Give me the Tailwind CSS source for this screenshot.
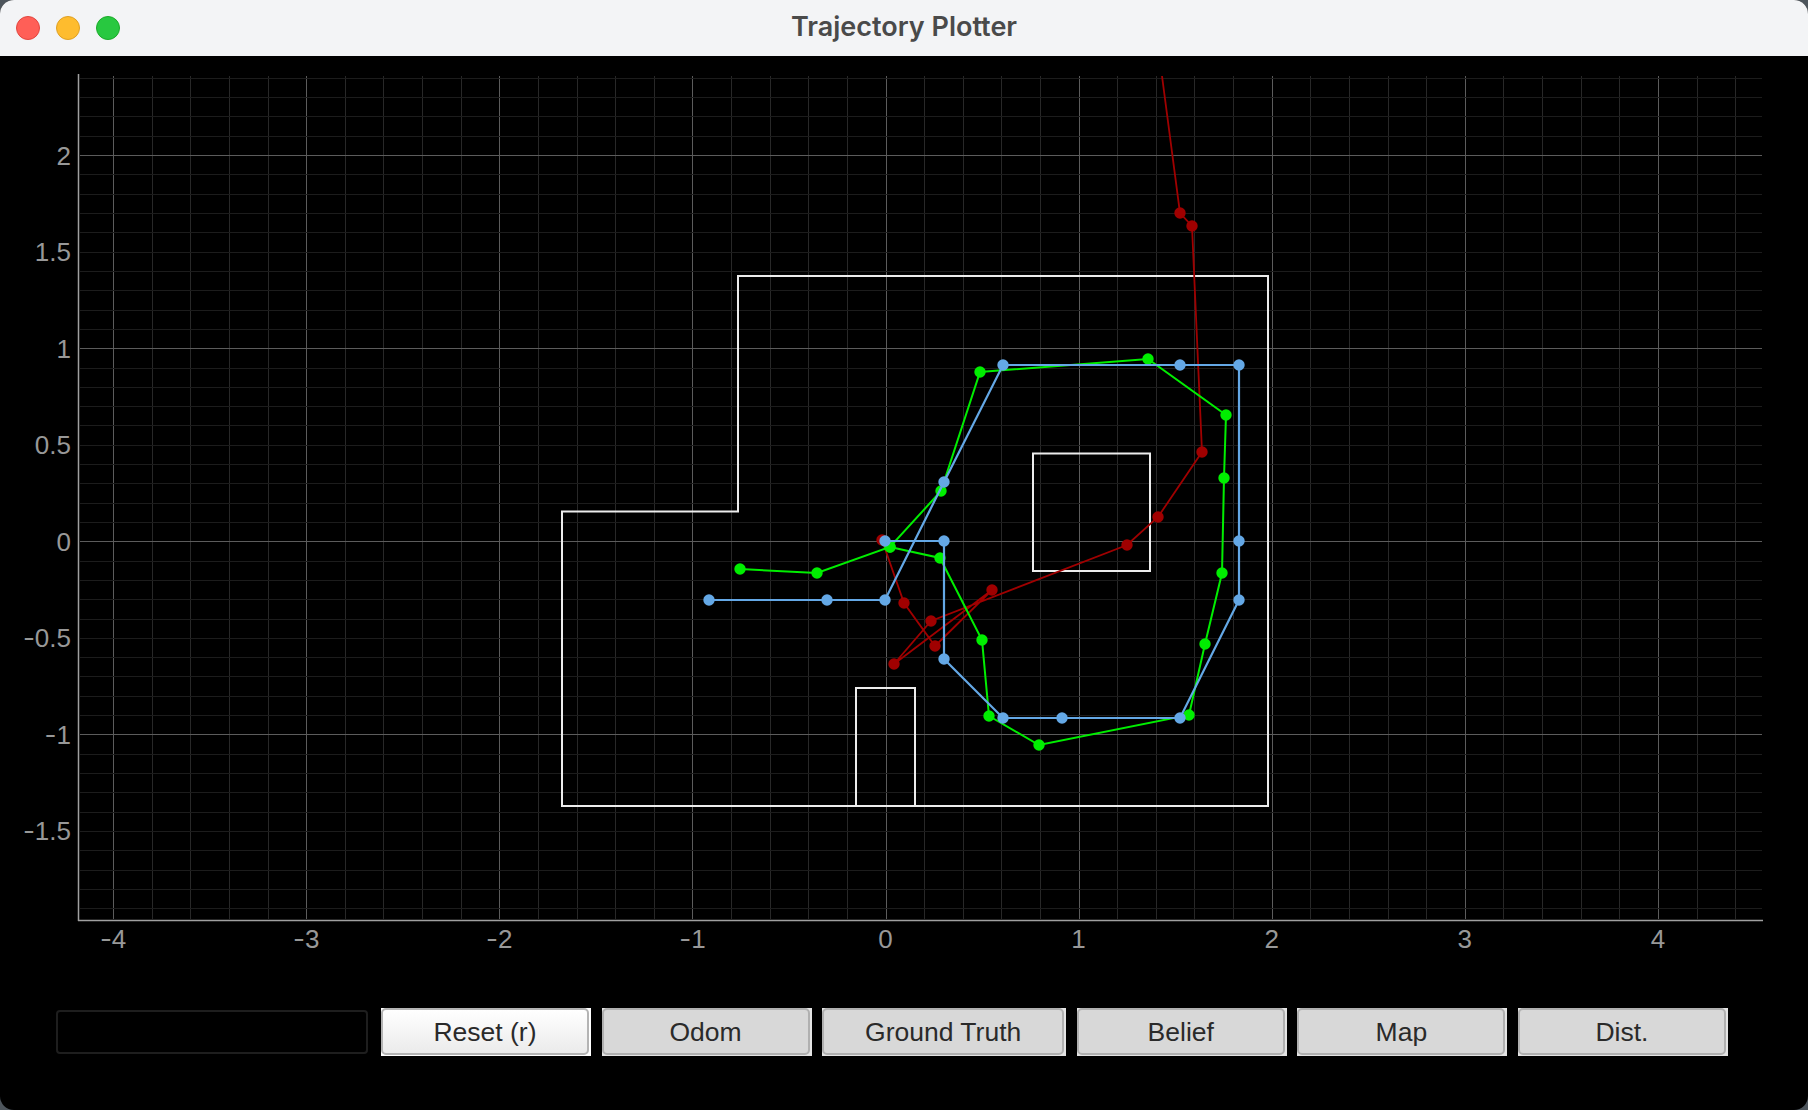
<!DOCTYPE html>
<html lang="en">
  <head>
    <meta charset="UTF-8" />
    <meta name="viewport" content="width=device-width, initial-scale=1.0" />
    <title>Trajectory Plotter</title>
    <script src="https://cdn.jsdelivr.net/npm/@tailwindcss/browser@4"></script>
  </head>
  <body class="bg-[#4d555c] h-[1110px] overflow-hidden font-['Liberation_Sans',sans-serif]">
    <div class="h-full flex flex-col bg-black rounded-[14px] overflow-hidden">
      <!-- Title bar -->
      <div class="h-14 shrink-0 bg-[#f3f4f6] relative flex items-center justify-center">
        <div class="absolute left-4 top-4 flex gap-4">
          <span class="w-6 h-6 rounded-full bg-[#ff5f57] border border-[#e2463f]"></span>
          <span class="w-6 h-6 rounded-full bg-[#febc2e] border border-[#dfa023]"></span>
          <span class="w-6 h-6 rounded-full bg-[#28c840] border border-[#1aab29]"></span>
        </div>
        <span class="text-[27px] font-semibold text-[#4a4a4a] font-['Inter',sans-serif] -mt-[2px]">Trajectory Plotter</span>
      </div>

      <!-- Plot -->
      <svg id="plot" class="block shrink-0" width="1808" height="952" viewBox="0 56 1808 952"></svg>

      <!-- Controls -->
      <div class="flex items-center pl-[56px] gap-[10.6px] h-[48px]">
        <div class="w-[312px] h-[44px] mr-[2.4px] rounded-[4px] border-2 border-[#1e1e1e] bg-black"></div>
        <button class="w-[210px] h-[48px] bg-white pr-[2px] pb-[1px] text-[26.5px] text-[#2a2a2a]">
          <span class="flex items-center justify-center h-full pt-[2px] bg-gradient-to-b from-white to-[#ebebeb] border-2 border-[#b4b4b4] rounded-[5px]">Reset (r)</span>
        </button>
        <button class="w-[210px] h-[48px] bg-[#e4e4e4] pr-[2px] pb-[1px] text-[26.5px] text-[#2a2a2a]">
          <span class="flex items-center justify-center h-full pt-[2px] bg-[#d8d8d8] border-2 border-[#b0b0b0] rounded-[5px]">Odom</span>
        </button>
        <button class="w-[244px] h-[48px] bg-[#e4e4e4] pr-[2px] pb-[1px] text-[26.5px] text-[#2a2a2a]">
          <span class="flex items-center justify-center h-full pt-[2px] bg-[#d8d8d8] border-2 border-[#b0b0b0] rounded-[5px]">Ground Truth</span>
        </button>
        <button class="w-[210px] h-[48px] bg-[#e4e4e4] pr-[2px] pb-[1px] text-[26.5px] text-[#2a2a2a]">
          <span class="flex items-center justify-center h-full pt-[2px] bg-[#d8d8d8] border-2 border-[#b0b0b0] rounded-[5px]">Belief</span>
        </button>
        <button class="w-[210px] h-[48px] bg-[#e4e4e4] pr-[2px] pb-[1px] text-[26.5px] text-[#2a2a2a]">
          <span class="flex items-center justify-center h-full pt-[2px] bg-[#d8d8d8] border-2 border-[#b0b0b0] rounded-[5px]">Map</span>
        </button>
        <button class="w-[210px] h-[48px] bg-[#e4e4e4] pr-[2px] pb-[1px] text-[26.5px] text-[#2a2a2a]">
          <span class="flex items-center justify-center h-full pt-[2px] bg-[#d8d8d8] border-2 border-[#b0b0b0] rounded-[5px]">Dist.</span>
        </button>
      </div>
    </div>

    <script>
      const X0 = 885.5, Y0 = 541.3, UNIT = 193.1;
      const LEFT = 80, RIGHT = 1762, TOP = 76, BOTTOM = 919;

      const walls = [
        "562,806 562,511.5 738,511.5 738,276 1268,276 1268,806",
        "1033,453.5 1150,453.5 1150,571 1033,571",
        "856,806 856,688 915,688 915,806",
      ];

      const trajectories = [
        {
          color: "#a00000",
          width: 1.8,
          points: [[882,540],[904,603],[935,646],[992,590],[894,664],[931,621],[1127,545],[1158,517],[1202,452],[1192,226],[1180,213]],
          tail: [1162,76],
        },
        {
          color: "#00ee00",
          width: 2,
          points: [[740,569],[817,573],[890,547],[941,491],[980,372],[1148,359],[1226,415],[1224,478],[1222,573],[1205,644],[1189,715],[1039,745],[989,716],[982,640],[940,558],[890,547]],
        },
        {
          color: "#64a8e6",
          width: 2.2,
          points: [[709,600],[827,600],[885,600],[944,482],[1003,365],[1180,365],[1239,365],[1239,541],[1239,600],[1180,718],[1062,718],[1003,718],[944,659],[944,541],[885,541]],
        },
      ];

      const svg = document.getElementById("plot");
      let out = "";

      function line(x1, y1, x2, y2, color, width = 1) {
        out += `<line x1="${x1}" y1="${y1}" x2="${x2}" y2="${y2}" stroke="${color}" stroke-width="${width}" />`;
      }

      // Inter's hyphen is the closer match for the plot's wider minus
      function label(x, y, anchor, v) {
        const text = v < 0 ? `<tspan font-family="Inter">-</tspan>${-v}` : v;
        out += `<text x="${x}" y="${y}" text-anchor="${anchor}" font-size="26" fill="#989898">${text}</text>`;
      }

      // Grid: x lines every 0.2, y lines every 0.1
      for (let i = -25; i <= 25; i++) {
        const x = Math.round(X0 + (i * UNIT) / 5) + 0.5;
        if (x < LEFT || x > RIGHT) continue;
        line(x, TOP, x, BOTTOM, i % 5 === 0 ? "#5c5c5c" : "#282828");
      }
      for (let i = -25; i <= 25; i++) {
        const y = Math.round(Y0 - (i * UNIT) / 10) + 0.5;
        if (y < TOP || y > BOTTOM) continue;
        line(LEFT, y, RIGHT, y, i % 10 === 0 ? "#5c5c5c" : "#1c1c1c");
      }

      // Axes
      line(78.5, 74, 78.5, 921, "#a0a0a0", 1.5);
      line(78, 920.5, 1763, 920.5, "#a0a0a0", 1.5);

      // Tick labels
      for (let v = -4; v <= 4; v++) label(X0 + v * UNIT, 948, "middle", v);
      for (let v = -1.5; v <= 2; v += 0.5) label(71, Y0 - v * UNIT + 9.5, "end", v);

      // Map walls
      for (const points of walls) {
        out += `<polygon points="${points}" fill="none" stroke="#ececec" stroke-width="2" />`;
      }

      // Trajectories
      for (const t of trajectories) {
        const pts = t.tail ? [...t.points, t.tail] : t.points;
        out += `<polyline points="${pts.join(" ")}" fill="none" stroke="${t.color}" stroke-width="${t.width}" />`;
        for (const [x, y] of t.points) {
          out += `<circle cx="${x}" cy="${y}" r="5.7" fill="${t.color}" />`;
        }
      }

      svg.innerHTML = out;
    </script>
  </body>
</html>
